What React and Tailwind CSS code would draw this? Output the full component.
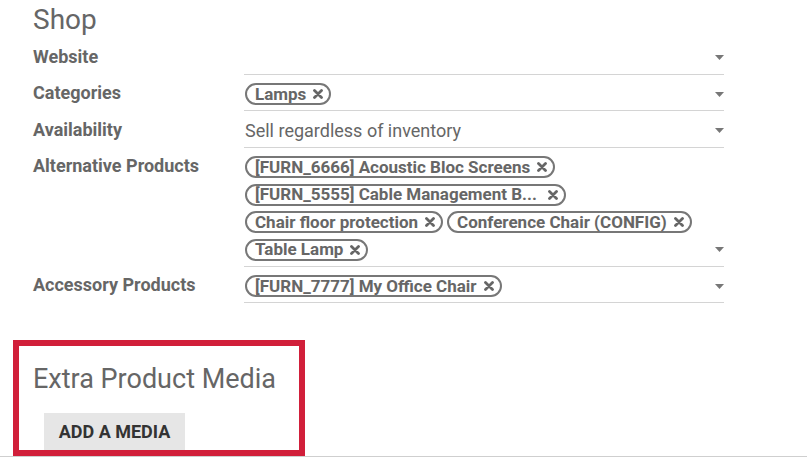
import React from 'react';

const Caret = () => (
  <div className="flex h-[22px] w-[16px] shrink-0 items-center justify-end">
    <svg width="9" height="5" viewBox="0 0 9 5">
      <path d="M0 0 L9 0 L4.5 5 Z" fill="#777" />
    </svg>
  </div>
);

const Tag = ({ children }) => (
  <span className="inline-flex h-[22px] items-center whitespace-nowrap rounded-full border-2 border-[#777] pl-[8px] pr-[6px] text-[17px] font-bold leading-none text-[#666]">
    {children}
    <svg className="ml-[7px]" width="10" height="10" viewBox="0 0 10 10">
      <path d="M1.5 1.5 L8.5 8.5 M8.5 1.5 L1.5 8.5" stroke="#666" strokeWidth="2.8" strokeLinecap="round" />
    </svg>
  </span>
);

const Row = ({ label, children }) => (
  <div className="flex">
    <div className="w-[211px] shrink-0 pt-[7.5px] text-[18px] font-bold leading-[22px] text-[#666]">
      {label}
    </div>
    <div className="flex w-[480px] items-end border-b border-[#d4d4d4] pt-[8.5px] pb-[5px] pl-[1px]">
      <div className="flex min-h-[22px] flex-1 flex-wrap items-center gap-x-[4px] gap-y-[5.5px] leading-[22px]">
        {children}
      </div>
      <Caret />
    </div>
  </div>
);

export default function App() {
  return (
    <div className="h-[459px] w-[807px] overflow-hidden bg-white font-['Roboto',sans-serif]">
      <div className="px-[33px]">
        <h2 className="pt-[1px] text-[28px] font-normal leading-[37px] text-[#666]">Shop</h2>
        <Row label="Website" />
        <Row label="Categories">
          <Tag>Lamps</Tag>
        </Row>
        <Row label="Availability">
          <span className="text-[18px] text-[#666]">Sell regardless of inventory</span>
        </Row>
        <Row label="Alternative Products">
          <Tag>[FURN_6666] Acoustic Bloc Screens</Tag>
          <Tag>[FURN_5555] Cable Management B...&nbsp;</Tag>
          <Tag>Chair floor protection</Tag>
          <Tag>Conference Chair (CONFIG)</Tag>
          <Tag>Table Lamp</Tag>
        </Row>
        <Row label="Accessory Products">
          <Tag>[FURN_7777] My Office Chair</Tag>
        </Row>
      </div>

      <div className="mt-[37px] border-b border-[#cfcfcf]">
        <div className="ml-[13px] w-[292px] border-[6px] border-[#d11f3a] pl-[14px] pt-[17px]">
          <h3 className="text-[27px] font-normal leading-[32px] text-[#666]">Extra Product Media</h3>
          <button className="mt-[18px] ml-[11px] block h-[37px] w-[141px] bg-[#e6e6e6] text-[18px] font-bold text-[#333]">
            ADD A MEDIA
          </button>
        </div>
      </div>
    </div>
  );
}
